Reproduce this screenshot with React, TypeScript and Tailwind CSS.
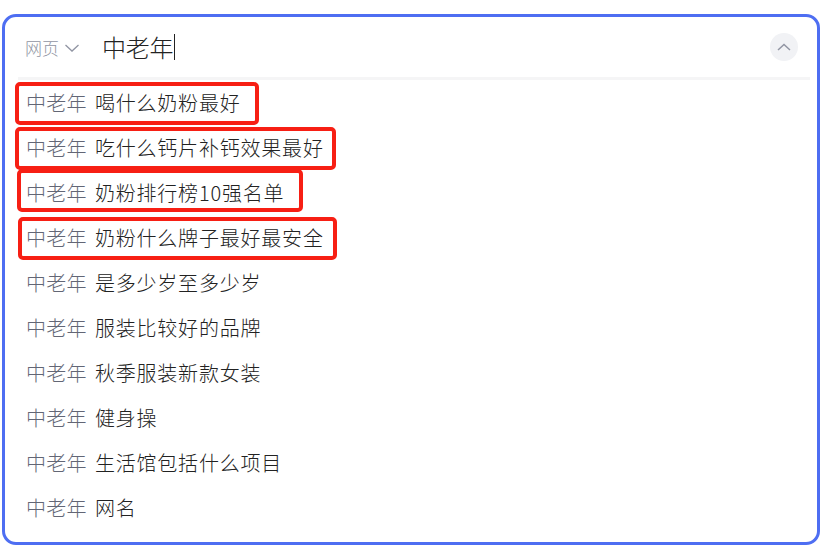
import React from "react";

const items: { rest: string }[] = [
  { rest: "喝什么奶粉最好" },
  { rest: "吃什么钙片补钙效果最好" },
  { rest: "奶粉排行榜10强名单" },
  { rest: "奶粉什么牌子最好最安全" },
  { rest: "是多少岁至多少岁" },
  { rest: "服装比较好的品牌" },
  { rest: "秋季服装新款女装" },
  { rest: "健身操" },
  { rest: "生活馆包括什么项目" },
  { rest: "网名" },
];

export default function App() {
  return (
    <div
      className="w-[821px] h-[547px] bg-white overflow-hidden pt-[14px] pl-[2px] font-light"
      style={{ fontFamily: '"Noto Sans CJK SC", "Noto Sans", sans-serif' }}
    >
      <div className="relative w-[818px] h-[531px] border-[3px] border-[#4e6ef2] rounded-[14px] bg-white">
        {/* header */}
        <div className="flex items-center h-[60px] pl-[20px] pr-[19px]">
          <div className="flex items-center text-[17px] text-[#9195a3] leading-none">
            <span>网页</span>
            <svg width="16" height="10" viewBox="0 0 16 10" className="ml-[5px] mt-[1px]">
              <path d="M1.5 2 L8 8 L14.5 2" fill="none" stroke="#9195a3" strokeWidth="1.3" />
            </svg>
          </div>
          <div className="flex items-center ml-[22px] text-[24px] text-[#222222] leading-none">
            <span className="tracking-[-0.3px]">中老年</span>
            <span className="ml-[1px] w-[1px] h-[26px] bg-[#222222]" />
          </div>
          <div className="ml-auto w-[28px] h-[28px] rounded-full bg-[#f1f2f5] flex items-center justify-center">
            <svg width="16" height="10" viewBox="0 0 16 10">
              <path d="M2 8 L8 2.5 L14 8" fill="none" stroke="#9195a3" strokeWidth="1.5" />
            </svg>
          </div>
        </div>
        {/* separator */}
        <div className="ml-[13px] mr-[7px] h-[3px] bg-[#f5f5f6]" />
        {/* rows */}
        <div className="flex flex-col">
          {items.map((it, i) => (
            <div key={i} className="h-[45px] flex items-center pl-[21px] text-[20px] leading-none">
              <span className="text-[#626675] tracking-[0.3px]">中老年</span>
              <span className="ml-[8px] text-[#222222] tracking-[0.8px]">{it.rest}</span>
            </div>
          ))}
        </div>
        {/* red annotation boxes */}
        <div className="absolute left-[10px] top-[65px] w-[244px] h-[43px] border-[4px] border-[#f71f14] rounded-[5px]" />
        <div className="absolute left-[10px] top-[110px] w-[321px] h-[43px] border-[4px] border-[#f71f14] rounded-[5px]" />
        <div className="absolute left-[12px] top-[152px] w-[286px] h-[43px] border-[4px] border-[#f71f14] rounded-[5px]" />
        <div className="absolute left-[13px] top-[200px] w-[319px] h-[43px] border-[4px] border-[#f71f14] rounded-[5px]" />
      </div>
    </div>
  );
}
